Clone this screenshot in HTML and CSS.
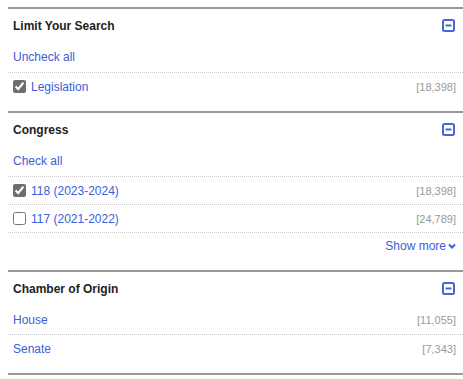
FILE: index.html
```html
<!DOCTYPE html>
<html lang="en">
<head>
<meta charset="utf-8">
<title>Facets</title>
<link rel="stylesheet" href="styles.css">
</head>
<body>
<div class="facets">
  <section class="facet">
    <div class="facet-head">
      <h3>Limit Your Search</h3>
      <span class="toggle"><svg width="13" height="13" viewBox="0 0 13 13"><rect x="1" y="1" width="11" height="11" rx="1.5" fill="none" stroke="#4a64d8" stroke-width="2"/><rect x="3.5" y="5.5" width="6" height="2" fill="#4a64d8"/></svg></span>
    </div>
    <div class="facet-action"><a href="#">Uncheck all</a></div>
    <ul class="facet-list">
      <li class="facet-item"><label><input type="checkbox" checked><a href="#">Legislation</a></label><span class="count">[18,398]</span></li>
    </ul>
  </section>
  <section class="facet">
    <div class="facet-head">
      <h3>Congress</h3>
      <span class="toggle"><svg width="13" height="13" viewBox="0 0 13 13"><rect x="1" y="1" width="11" height="11" rx="1.5" fill="none" stroke="#4a64d8" stroke-width="2"/><rect x="3.5" y="5.5" width="6" height="2" fill="#4a64d8"/></svg></span>
    </div>
    <div class="facet-action"><a href="#">Check all</a></div>
    <ul class="facet-list">
      <li class="facet-item"><label><input type="checkbox" checked><a href="#">118 (2023-2024)</a></label><span class="count">[18,398]</span></li>
      <li class="facet-item"><label><input type="checkbox"><a href="#">117 (2021-2022)</a></label><span class="count">[24,789]</span></li>
      <li class="facet-more"><a href="#">Show more<svg class="chev" width="8" height="6" viewBox="0 0 8 6"><polyline points="1,1.5 4,4.5 7,1.5" fill="none" stroke="#3c60d8" stroke-width="2"/></svg></a></li>
    </ul>
  </section>
  <section class="facet">
    <div class="facet-head">
      <h3>Chamber of Origin</h3>
      <span class="toggle"><svg width="13" height="13" viewBox="0 0 13 13"><rect x="1" y="1" width="11" height="11" rx="1.5" fill="none" stroke="#4a64d8" stroke-width="2"/><rect x="3.5" y="5.5" width="6" height="2" fill="#4a64d8"/></svg></span>
    </div>
    <ul class="facet-list">
      <li class="facet-item first"><a href="#">House</a><span class="count">[11,055]</span></li>
      <li class="facet-item"><a href="#">Senate</a><span class="count">[7,343]</span></li>
    </ul>
  </section>
  <div class="facets-end"></div>
</div>
</body>
</html>
```

FILE: styles.css
```css
html, body {
  margin: 0;
  padding: 0;
  background: #fff;
}
body {
  padding: 7px 0 0 8px;
  font-family: "Liberation Sans", Arial, sans-serif;
  font-size: 12px;
  color: #222;
}
.facets {
  width: 455px;
}
.facet {
  border-top: 2px solid #999;
  padding: 0 7px 11px 5px;
}
.facet-head {
  height: 33px;
  display: flex;
  align-items: center;
  justify-content: space-between;
}
.facet-head h3 {
  margin: 0;
  font-size: 12px;
  font-weight: bold;
  color: #222;
}
.toggle {
  display: flex;
  width: 13px;
  height: 13px;
  margin-right: 1px;
}
a {
  color: #3c60d8;
  text-decoration: none;
}
.facet-action {
  height: 30px;
  display: flex;
  align-items: center;
}
.facet-list {
  list-style: none;
  margin: 0;
  padding: 0;
}
.facet-item {
  border-top: 1px dotted #c8c8c8;
  height: 27px;
  display: flex;
  align-items: center;
  justify-content: space-between;
  margin: 0 -7px 0 -5px;
  padding: 0 7px 0 5px;
}
.facet-item.first {
  border-top: none;
  height: 29px;
}
.facet-item label {
  display: flex;
  align-items: center;
}
.facet-item input {
  margin: 0 5px 0 0;
  width: 13px;
  height: 13px;
  accent-color: #6e6e6e;
}
.count {
  color: #999;
  font-size: 11px;
}
.facet-more {
  border-top: 1px dotted #c8c8c8;
  height: 26px;
  display: flex;
  align-items: center;
  justify-content: flex-end;
  margin: 0 -7px 0 -5px;
  padding: 0 7px 0 5px;
}
.facet-more a {
  display: flex;
  align-items: center;
}
.chev {
  margin-left: 2px;
}
.facets-end {
  border-top: 2px solid #999;
}
```
